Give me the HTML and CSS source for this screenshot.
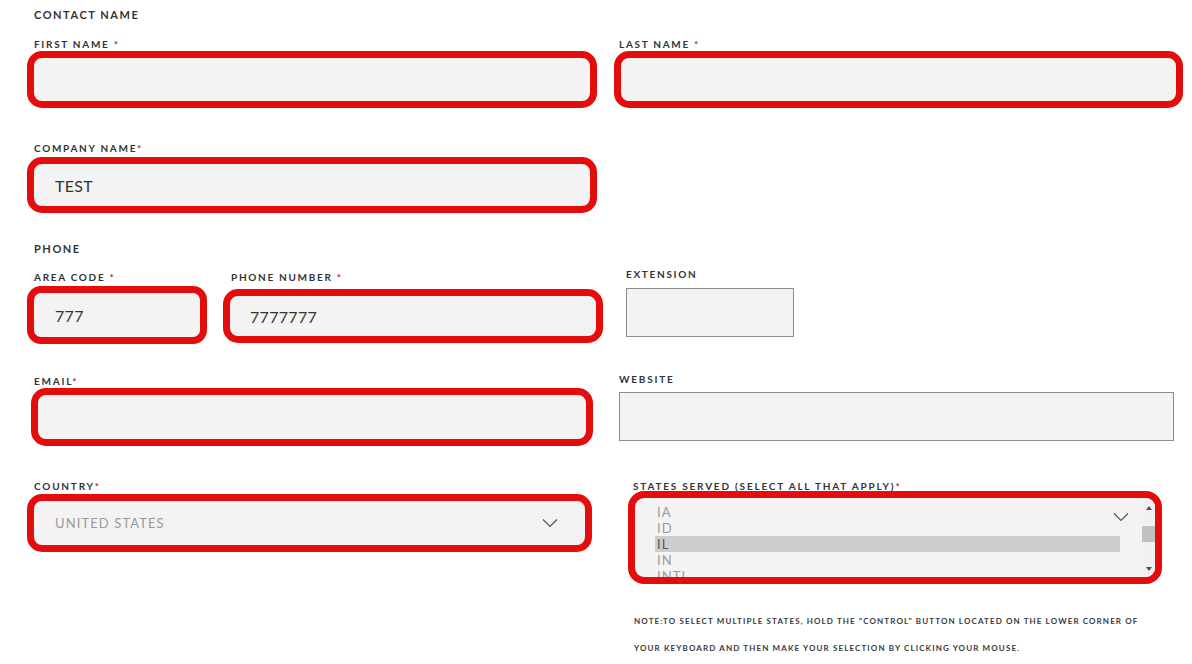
FILE: index.html
```html
<!DOCTYPE html>
<html>
<head>
<meta charset="utf-8">
<link rel="stylesheet" href="styles.css">
</head>
<body>
<form class="form">
  <div class="title t-contact">CONTACT NAME</div>

  <div class="row row-a">
    <div class="field f-first">
      <label class="lbl">FIRST NAME <span class="req">*</span></label>
      <div class="hl h-first"></div>
    </div>
    <div class="field f-last">
      <label class="lbl">LAST NAME <span class="req">*</span></label>
      <div class="hl h-last"></div>
    </div>
  </div>

  <div class="row row-b">
    <div class="field f-company">
      <label class="lbl">COMPANY NAME<span class="req">*</span></label>
      <div class="hl h-company"><span class="val">TEST</span></div>
    </div>
  </div>

  <div class="title t-phone">PHONE</div>

  <div class="row row-d">
    <div class="field f-area">
      <label class="lbl">AREA CODE <span class="req">*</span></label>
      <div class="hl h-area"><span class="val">777</span></div>
    </div>
    <div class="field f-phone">
      <label class="lbl">PHONE NUMBER <span class="req">*</span></label>
      <div class="hl h-phone"><span class="val">7777777</span></div>
    </div>
    <div class="field f-ext">
      <label class="lbl">EXTENSION</label>
      <div class="box b-ext"></div>
    </div>
  </div>

  <div class="row row-e">
    <div class="field f-email">
      <label class="lbl lbl-din">EMAIL<span class="req">*</span></label>
      <div class="hl h-email"></div>
    </div>
    <div class="field f-web">
      <label class="lbl lbl-din">WEBSITE</label>
      <div class="box b-web"></div>
    </div>
  </div>

  <div class="row row-f">
    <div class="field f-country">
      <label class="lbl lbl-din">COUNTRY<span class="req">*</span></label>
      <div class="hl h-country">
        <span class="val val-grey">UNITED STATES</span>
        <svg class="chev" width="16" height="10" viewBox="0 0 16 10"><path d="M1 1.5l7 7 7-7" fill="none" stroke="#555" stroke-width="1.2"/></svg>
      </div>
    </div>
    <div class="field f-states">
      <label class="lbl lbl-din">STATES SERVED (SELECT ALL THAT APPLY)<span class="req">*</span></label>
      <div class="hl h-states">
        <div class="list">
          <div class="opt">IA</div>
          <div class="opt">ID</div>
          <div class="opt sel">IL</div>
          <div class="opt">IN</div>
          <div class="opt">INTL</div>
        </div>
        <div class="sbar">
          <span class="arr up"></span>
          <span class="thumb"></span>
          <span class="arr down"></span>
        </div>
        <svg class="chev-over" width="16" height="10" viewBox="0 0 16 10"><path d="M1 1.5l7 7 7-7" fill="none" stroke="#555" stroke-width="1.2"/></svg>
      </div>
      <p class="note">NOTE:TO SELECT MULTIPLE STATES, HOLD THE "CONTROL" BUTTON LOCATED ON THE LOWER CORNER OF YOUR KEYBOARD AND THEN MAKE YOUR SELECTION BY CLICKING YOUR MOUSE.</p>
    </div>
  </div>
</form>
</body>
</html>
```

FILE: styles.css
```css
* { box-sizing: border-box; }
html, body { margin: 0; padding: 0; background: #fff; }
body { font-family: Lato, "Open Sans", sans-serif; color: #333; }

.form {
  width: 1192px;
  height: 664px;
  padding: 8px 0 0 27px;
  overflow: hidden;
}

.title {
  font-size: 11px;
  line-height: 13px;
  font-weight: 700;
  letter-spacing: 1.55px;
  color: #333;
  padding-left: 7px;
}
.t-phone { margin-top: 29px; }

.row { display: flex; align-items: flex-start; }
.field { display: flex; flex-direction: column; }

.lbl {
  display: block;
  font-size: 10px;
  line-height: 12px;
  font-weight: 700;
  letter-spacing: 1.7px;
  color: #333;
  white-space: nowrap;
}
.lbl-din { letter-spacing: 1.8px; }
.req { color: #c0262d; }

.hl {
  border: 7px solid #e40d0d;
  border-radius: 15px;
  background: #f3f3f3;
  display: flex;
  align-items: center;
  padding-left: 21px;
}
.val {
  font-size: 16px;
  color: #333;
  letter-spacing: 0.3px;
}
.val-grey {
  font-size: 13px;
  color: #9a9a9a;
  letter-spacing: 1.1px;
}

.box {
  border: 1px solid #8c8c8c;
  background: #f3f3f3;
}

/* row A */
.row-a { margin-top: 17px; gap: 17px; }
.f-first { width: 570px; }
.f-first .lbl { padding-left: 7px; margin-bottom: 1px; }
.f-last { width: 569px; }
.f-last .lbl { padding-left: 5px; margin-bottom: 1px; }
.h-first, .h-last { height: 57px; }

/* row B */
.row-b { margin-top: 34px; }
.f-company { width: 570px; }
.f-company .lbl { padding-left: 7px; margin-bottom: 3px; }
.h-company { height: 56px; }

/* row D */
.row-d { margin-top: 13px; }
.f-area { width: 180px; margin-top: 3px; }
.f-area .lbl { padding-left: 7px; margin-bottom: 3px; }
.h-area { height: 58px; border-radius: 14px; }
.f-phone { width: 380px; margin-left: 16px; margin-top: 3px; }
.f-phone .lbl { padding-left: 8px; margin-bottom: 6px; }
.h-phone { height: 54px; padding-left: 20px; }
.f-ext { width: 168px; margin-left: 23px; }
.f-ext .lbl { margin-bottom: 8px; }
.b-ext { height: 49px; }

/* row E */
.row-e { margin-top: 29px; }
.f-email { width: 562px; margin-left: 4px; margin-top: 2px; }
.f-email .lbl { padding-left: 3px; margin-bottom: 1px; }
.h-email { height: 58px; }
.f-web { width: 555px; margin-left: 26px; }
.f-web .lbl { margin-bottom: 7px; }
.b-web { height: 49px; }

/* row F */
.row-f { margin-top: 34px; }
.f-country { width: 565px; }
.f-country .lbl { padding-left: 7px; margin-bottom: 2px; }
.h-country {
  height: 58px;
  justify-content: space-between;
  padding-right: 27px;
}
.chev { display: block; }

.f-states { width: 534px; margin-left: 36px; }
.f-states .lbl { padding-left: 5px; margin-bottom: -1px; }
.h-states {
  position: relative;
  height: 93px;
  padding-left: 20px;
  align-items: stretch;
  overflow: hidden;
  border-radius: 16px;
}
.list {
  flex: 1;
  padding-top: 6px;
  margin-right: 22px;
}
.opt {
  font-size: 13px;
  line-height: 16px;
  color: #9a9a9a;
  letter-spacing: 1.1px;
  padding-left: 2px;
}
.opt.sel { background: #cdcdcd; color: #555; }

.sbar {
  width: 13px;
  background: #f1f1f1;
  display: flex;
  flex-direction: column;
  align-items: center;
  padding-top: 8px;
}
.arr {
  width: 0; height: 0;
  border-left: 3.5px solid transparent;
  border-right: 3.5px solid transparent;
}
.arr.up { border-bottom: 4px solid #505050; }
.arr.down { border-top: 4px solid #505050; margin-top: 25px; }
.thumb {
  width: 13px;
  height: 16px;
  background: #c1c1c1;
  margin-top: 16px;
}

.chev-over {
  position: absolute;
  left: 478px;
  top: 14px;
}

.note {
  margin: 24px 0 0 0;
  padding-left: 6px;
  font-size: 8px;
  line-height: 27px;
  font-weight: 700;
  letter-spacing: 1.12px;
  color: #3a3a3a;
  width: 534px;
}
```
